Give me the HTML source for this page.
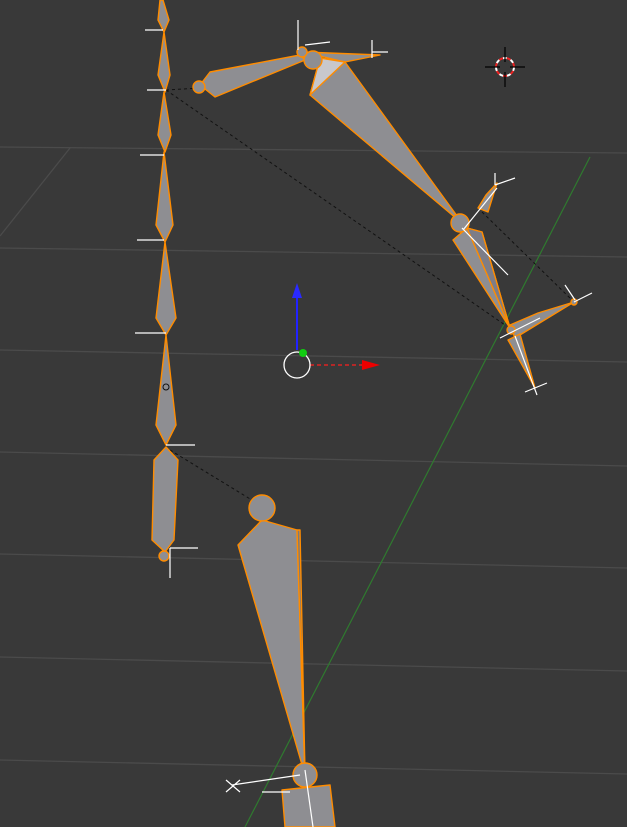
<!DOCTYPE html>
<html><head><style>html,body{margin:0;padding:0;background:#393939;overflow:hidden}svg{display:block}</style></head>
<body>
<svg width="627" height="827" viewBox="0 0 627 827" xmlns="http://www.w3.org/2000/svg">
<rect width="627" height="827" fill="#393939"/>
<g stroke="#4b4b4b" stroke-width="1.3" fill="none">
<path d="M0 147 L627 153"/><path d="M0 248 L627 257"/><path d="M0 350 L627 362"/><path d="M0 452 L627 466"/><path d="M0 554 L627 568"/><path d="M0 657 L627 671"/><path d="M0 760 L627 774"/>
<path d="M70 148 L0 236"/>
</g>
<path d="M590 157 L245 827" stroke="#2f7a2f" stroke-width="1.2"/>
<g stroke="#111" stroke-width="1" stroke-dasharray="3,3" fill="none">
<path d="M166 90 L505 325"/><path d="M166 90 L200 88"/><path d="M482 212 L572 300"/><path d="M170 450 L260 505"/>
</g>
<g fill="#8e8e92" stroke="#ff8c00" stroke-width="1.4" stroke-linejoin="round">
<polygon points="163,0 169,20 164,32 158,20 160,0"/>
<polygon points="164,32 170,75 165,92 158,75"/>
<polygon points="164,92 171,135 165,152 158,135"/>
<polygon points="164,152 173,225 165,242 156,225"/>
<polygon points="165,242 176,318 166,335 156,318"/>
<polygon points="166,335 176,425 166,445 156,425"/>
<polygon points="166,447 178,460 174,540 165,552 152,540 154,460"/>
<circle cx="164" cy="556" r="5"/>
<polygon points="300,55 210,72 200,85 215,97 305,60"/>
<circle cx="199" cy="87" r="6"/>
<polygon points="303,52 380,55 345,62"/>
<polygon points="320,58 345,62 460,220 470,230 310,95"/>
<polygon points="320,58 345,62 310,95" fill="#c8c8cc"/>
<circle cx="313" cy="60" r="9"/>
<circle cx="302" cy="52" r="5"/>
<polygon points="453,240 467,228 482,232 510,328"/>
<polygon points="467,228 482,232 510,328" fill="#7d7d88"/>
<circle cx="460" cy="223" r="9"/>
<polygon points="478,208 486,195 497,183 488,212"/>
<polygon points="510,325 538,313 574,302 515,338"/>
<polygon points="508,340 520,334 535,388"/>
<circle cx="511" cy="330" r="4"/>
<circle cx="574" cy="302" r="3"/>
<polygon points="238,545 262,520 297,530 305,775"/>
<polygon points="297,530 305,775 300,530" fill="#7a7a7e"/>
<circle cx="262" cy="508" r="13"/>
<polygon points="282,790 330,785 335,827 285,827"/>
<circle cx="305" cy="775" r="12"/>
</g>
<g stroke="#fff" stroke-width="1.2" fill="none">
<path d="M145 30 H163"/><path d="M147 90 H166"/><path d="M140 155 H164"/><path d="M137 240 H164"/><path d="M135 333 H166"/>
<path d="M166 445 H195"/><path d="M170 548 H198"/><path d="M170 548 V578"/>
<path d="M298 20 V50 M305 45 L330 42 M372 40 V58 M372 52 H388"/>
<path d="M462 228 L508 275 M463 230 L497 188 M495 185 L515 178 M495 173 V185"/>
<path d="M500 338 L540 318 M574 302 L592 293 M565 285 L575 300"/>
<path d="M515 336 L537 395 M525 392 L547 383"/>
<path d="M232 785 L300 775 M226 780 L240 792 M240 780 L226 792"/>
<path d="M262 792 H290 M305 770 L313 827"/>
</g>
<circle cx="166" cy="387" r="3" fill="none" stroke="#111"/>
<path d="M297 350 V292" stroke="#2222ff" stroke-width="2"/>
<polygon points="292,298 297,283 302,298" fill="#2a2aff"/>
<path d="M310 365 H365" stroke="#d22" stroke-width="1.5" stroke-dasharray="4,3"/>
<polygon points="362,360 380,365 362,370" fill="#e00"/>
<circle cx="297" cy="365" r="13" fill="none" stroke="#fff" stroke-width="1.3"/>
<circle cx="303" cy="353" r="4" fill="#1c1"/>
<circle cx="505" cy="67" r="9" fill="none" stroke="#fff" stroke-width="2" stroke-dasharray="4,4"/>
<circle cx="505" cy="67" r="9" fill="none" stroke="#e22" stroke-width="2" stroke-dasharray="4,4" stroke-dashoffset="4"/>
<path d="M485 67 H500 M510 67 H525 M505 47 V62 M505 72 V87" stroke="#000" stroke-width="1.2"/>
</svg>
</body></html>
